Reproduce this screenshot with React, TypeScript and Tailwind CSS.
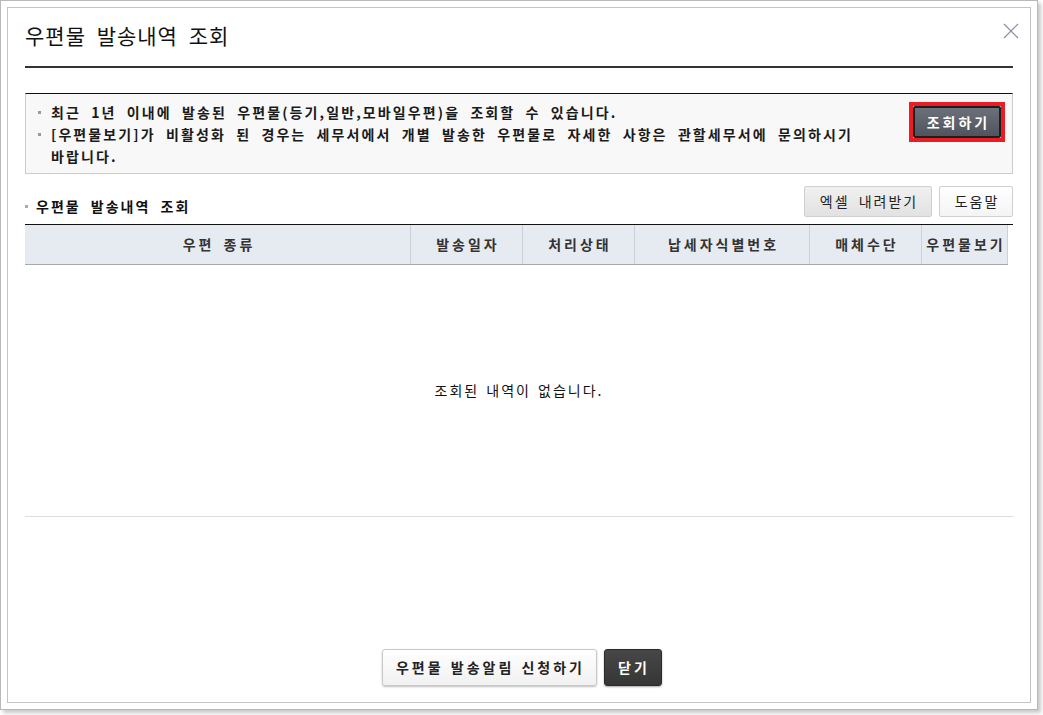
import React from 'react';

const Bullet: React.FC<{ className?: string }> = ({ className }) => (
  <span className={`inline-block w-[3px] h-[3px] bg-[#9a9a9a] ${className || ''}`} />
);

const columns = [
  { label: '우편 종류', w: 'w-[386px]' },
  { label: '발송일자', w: 'w-[112px]' },
  { label: '처리상태', w: 'w-[112px]' },
  { label: '납세자식별번호', w: 'w-[175px]' },
  { label: '매체수단', w: 'w-[112px]' },
  { label: '우편물보기', w: 'w-[86px]' },
];

const App: React.FC = () => {
  return (
    <div className="w-[1043px] h-[715px] bg-white font-['Noto_Sans_CJK_KR','Noto_Sans',sans-serif] text-[#111]">
      {/* outer frame */}
      <div className="w-[1038px] h-[710px] border border-[#b8b8b8] bg-white p-[6px] shadow-[3px_3px_4px_rgba(0,0,0,0.22)]">
        {/* inner dialog */}
        <div className="h-full border border-[#c4c4c4] px-[17px] flex flex-col">
          {/* header */}
          <div className="flex items-start justify-between pt-[12px] h-[60px] shrink-0 border-b-2 border-[#333]">
            <h1 className="text-[21px] leading-[30px] font-normal tracking-[1px] [word-spacing:5px] text-[#111]">우편물 발송내역 조회</h1>
            <button className="mt-[3px] -mr-[6px] w-[16px] h-[16px]">
              <svg width="16" height="16" viewBox="0 0 16 16">
                <path d="M1 1L15 15M15 1L1 15" stroke="#8a90a0" strokeWidth="1.2" fill="none" />
              </svg>
            </button>
          </div>

          {/* info box */}
          <div className="mt-[25px] shrink-0 border border-[#cccccc] border-t-[#111] bg-[#f8f8f8] flex justify-between pl-[12px] pr-[7px] pt-[7px] h-[81px]">
            <div className="text-[14px] font-bold leading-[22px] tracking-[2.1px] [word-spacing:5px] text-[#1a1a1a] whitespace-nowrap">
              <div className="flex items-center gap-[10px]">
                <Bullet />
                <span>최근 1년 이내에 발송된 우편물(등기,일반,모바일우편)을 조회할 수 있습니다.</span>
              </div>
              <div className="flex items-start gap-[10px]">
                <Bullet className="mt-[10px]" />
                <span>
                  [우편물보기]가 비활성화 된 경우는 세무서에서 개별 발송한 우편물로 자세한 사항은 관할세무서에 문의하시기
                  <br />
                  바랍니다.
                </span>
              </div>
            </div>
            <div className="mt-[1px] h-[40px] border-[4px] border-[#ec1c24]">
              <button className="w-[88px] h-[32px] rounded-[2px] border-2 border-[#1e1e1e] bg-gradient-to-b from-[#6c7079] to-[#50545d] text-white text-[14px] font-bold tracking-[3px] pl-[3px]">
                조회하기
              </button>
            </div>
          </div>

          {/* section title + buttons */}
          <div className="mt-[12px] shrink-0 flex items-end justify-between">
            <div className="flex items-center gap-[8px] pb-[1px]">
              <Bullet className="bg-[#aaaaaa]" />
              <span className="text-[14px] font-bold leading-[20px] tracking-[2px] [word-spacing:5px] text-[#111]">우편물 발송내역 조회</span>
            </div>
            <div className="flex gap-[7px]">
              <button className="w-[128px] h-[31px] border border-[#cfcfcf] rounded-[2px] bg-gradient-to-b from-[#f0f0f0] to-[#e2e2e2] text-[14px] text-[#222] tracking-[2px] [word-spacing:4px] pl-[2px]">
                엑셀 내려받기
              </button>
              <button className="w-[74px] h-[31px] border border-[#cfcfcf] rounded-[2px] bg-gradient-to-b from-white to-[#f4f4f4] text-[14px] text-[#222] tracking-[2px] pl-[2px]">
                도움말
              </button>
            </div>
          </div>

          {/* table */}
          <div className="mt-[7px] shrink-0 border-t border-[#111] h-[293px] border-b border-b-[#dddddd] flex flex-col">
            <div className="flex h-[40px] w-[983px] bg-[#e6ebf2] border-b border-[#a5a9b0]">
              {columns.map((c) => (
                <div
                  key={c.label}
                  className={`${c.w} flex items-center justify-center pl-[3px] text-[14px] font-bold text-[#333] tracking-[3px] [word-spacing:3px] border-r border-[#c9d1dd]`}
                >
                  {c.label}
                </div>
              ))}
            </div>
            <div className="flex-1 flex items-center justify-center">
              <span className="text-[14px] text-[#111] tracking-[2px] [word-spacing:2px]">조회된 내역이 없습니다.</span>
            </div>
          </div>

          {/* footer buttons */}
          <div className="flex-1 flex items-end justify-center pl-[5px] pb-[16px] gap-[7px]">
            <button className="w-[215px] h-[37px] border border-[#c8c8c8] rounded-[3px] bg-gradient-to-b from-white to-[#f1f1f1] shadow-[0_1px_2px_rgba(0,0,0,0.25)] text-[14px] font-bold text-[#222] tracking-[3px] [word-spacing:1px] pl-[3px]">
              우편물 발송알림 신청하기
            </button>
            <button className="w-[58px] h-[37px] rounded-[3px] bg-gradient-to-b from-[#474747] to-[#363636] border border-[#2a2a2a] shadow-[0_1px_2px_rgba(0,0,0,0.35)] text-[14px] font-bold text-white tracking-[3px] pl-[3px]">
              닫기
            </button>
          </div>
        </div>
      </div>
    </div>
  );
};

export default App;
